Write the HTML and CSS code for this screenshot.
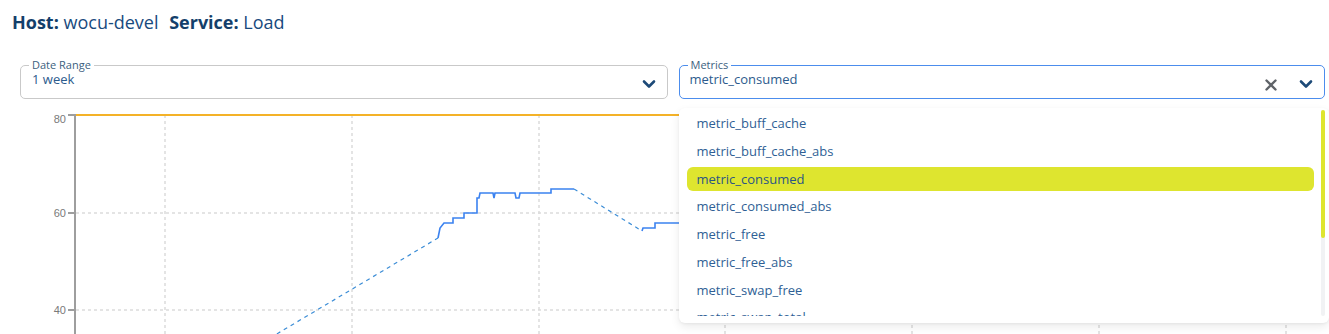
FILE: index.html
```html
<!DOCTYPE html>
<html lang="en">
<head>
  <meta charset="UTF-8" />
  <title>Service Load</title>
  <link rel="stylesheet" href="styles.css">
</head>
<body>
  <!-- Header -->
  <div class="page-header">
    <span class="label">Host:</span> wocu-devel
    <span class="label spaced">Service:</span> Load
  </div>

  <!-- Filters -->
  <div class="filters">
    <div class="field">
      <span class="field-label">Date Range</span>
      <span class="field-value">1 week</span>
      <div class="field-icons">
        <svg class="chevron" width="14" height="10" viewBox="0 0 14 10"><path d="M2 2.5 L7 7.5 L12 2.5" fill="none" stroke="#1d4a78" stroke-width="2.6" stroke-linecap="round" stroke-linejoin="round"/></svg>
      </div>
    </div>

    <div class="field focused">
      <span class="field-label">Metrics</span>
      <span class="field-value">metric_consumed</span>
      <div class="field-icons">
        <svg class="clear" width="12" height="12" viewBox="0 0 12 12"><path d="M1.5 1.5 L10.5 10.5 M10.5 1.5 L1.5 10.5" stroke="#5f6368" stroke-width="2.4" stroke-linecap="round"/></svg>
        <svg class="chevron" width="14" height="10" viewBox="0 0 14 10"><path d="M2 2.5 L7 7.5 L12 2.5" fill="none" stroke="#1d4a78" stroke-width="2.6" stroke-linecap="round" stroke-linejoin="round"/></svg>
      </div>

      <!-- Dropdown menu -->
      <div class="menu">
        <ul class="menu-list">
          <li>metric_buff_cache</li>
          <li>metric_buff_cache_abs</li>
          <li class="selected">metric_consumed</li>
          <li>metric_consumed_abs</li>
          <li>metric_free</li>
          <li>metric_free_abs</li>
          <li>metric_swap_free</li>
          <li>metric_swap_total</li>
        </ul>
        <div class="scrollbar"><div class="thumb"></div></div>
      </div>
    </div>
  </div>

  <!-- Chart -->
  <svg class="chart" width="1329" height="236" viewBox="0 98 1329 236">
    <g stroke="#dcdcdc" stroke-width="1.5" stroke-dasharray="3 3">
      <line x1="165" y1="114" x2="165" y2="334"/>
      <line x1="352" y1="114" x2="352" y2="334"/>
      <line x1="539" y1="114" x2="539" y2="334"/>
      <line x1="725" y1="114" x2="725" y2="334"/>
      <line x1="912" y1="114" x2="912" y2="334"/>
      <line x1="1099" y1="114" x2="1099" y2="334"/>
      <line x1="1286" y1="114" x2="1286" y2="334"/>
      <line x1="76" y1="212" x2="1329" y2="212"/>
      <line x1="76" y1="309" x2="1329" y2="309"/>
    </g>
    <line x1="75" y1="114" x2="1329" y2="114" stroke="#f4b228" stroke-width="2"/>
    <g stroke="#9e9e9e" stroke-width="2">
      <line x1="75" y1="113" x2="75" y2="334"/>
      <line x1="68" y1="114" x2="75" y2="114"/>
      <line x1="68" y1="212" x2="75" y2="212"/>
      <line x1="68" y1="309" x2="75" y2="309"/>
    </g>
    <g class="ticks" text-anchor="end">
      <text x="66" y="122">80</text>
      <text x="66" y="216">60</text>
      <text x="66" y="313">40</text>
    </g>
    <g fill="none" stroke="#3c8dd6" stroke-width="1.2" stroke-dasharray="4 4">
      <path d="M270 337 L438 237"/>
      <path d="M574 188 L642 230"/>
    </g>
    <path fill="none" stroke="#3b82f0" stroke-width="1.6"
      d="M438 237 L440 227 L444 222 L453 222 L453 217 L464 217 L464 212 L477 212 L477 197 L479 197 L480 192 L493 192 L494 197 L495 192 L515 192 L516 197 L519 197 L520 192 L551 192 L551 188 L574 188 M642 230 L643 227 L655 227 L655 222 L900 222 L900 217 L1329 217"/>
  </svg>
</body>
</html>
```

FILE: styles.css
```css
* {
  margin: 0;
  padding: 0;
  box-sizing: border-box;
}

body {
  font-family: 'Open Sans', 'Liberation Sans', sans-serif;
  background: #fff;
  color: #1c4f82;
  width: 1329px;
  height: 334px;
  overflow: hidden;
}

.page-header {
  height: 44px;
  padding: 10px 12px 0;
  font-size: 18px;
  line-height: 24px;
  color: #184a7e;
  white-space: nowrap;
}

.page-header .label {
  font-weight: 700;
  color: #143f6b;
}

.page-header .spaced {
  margin-left: 6px;
}

.filters {
  display: flex;
  gap: 11px;
  padding: 21px 4px 0 20px;
}

.field {
  position: relative;
  flex: 1;
  height: 34px;
  border: 1px solid #c9c9c9;
  border-radius: 5px;
  padding: 5px 11px 0;
  display: flex;
  align-items: flex-start;
}

.field.focused {
  border-color: #4c8ded;
  padding-left: 10px;
}

.field-label {
  position: absolute;
  top: -8px;
  left: 8px;
  padding: 0 3px;
  background: #fff;
  font-size: 11px;
  line-height: 14px;
  color: #3d5f80;
}

.field-value {
  font-size: 13px;
  line-height: 16px;
  color: #2c5b8d;
  flex: 1;
}

.field-icons {
  display: flex;
  align-items: center;
  gap: 22px;
  height: 26px;
}

.field-icons .clear {
  margin-top: 1px;
}

.menu {
  position: absolute;
  top: 42px;
  left: -1px;
  width: 650px;
  height: 215px;
  padding-bottom: 7px;
  background: #fff;
  border-radius: 6px;
  box-shadow: 0 4px 10px rgba(0, 0, 0, 0.08), 0 1px 3px rgba(0, 0, 0, 0.05);
  display: flex;
  z-index: 5;
}

.menu-list {
  list-style: none;
  flex: 1;
  padding: 3px 7px 0 8px;
  display: flex;
  flex-direction: column;
  gap: 3px;
  overflow: hidden;
}

.menu-list li {
  flex: none;
  height: 24.75px;
  line-height: 24.75px;
  padding-left: 10px;
  font-size: 13px;
  color: #2f5f95;
  border-radius: 6px;
}

.menu-list li.selected {
  background: #dee52f;
  color: #2a5585;
}

.scrollbar {
  width: 4px;
  margin: 2px 4px 0 0;
  background: #f1f2f4;
  border-radius: 2px;
}

.scrollbar .thumb {
  height: 128px;
  background: #dee52f;
  border-radius: 2px;
}

.chart {
  display: block;
}

.ticks text {
  font-family: 'Liberation Sans', sans-serif;
  font-size: 11px;
  fill: #7a7a7a;
}
```
